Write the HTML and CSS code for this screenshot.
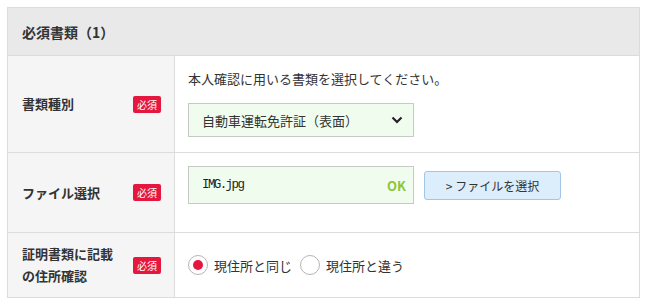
FILE: index.html
```html
<!DOCTYPE html>
<html lang="ja">
<head>
  <meta charset="UTF-8" />
  <title>必須書類</title>
  <link rel="stylesheet" href="styles.css">
</head>
<body>
  <div class="doc-box">
    <div class="doc-head">必須書類（1）</div>

    <div class="doc-row">
      <div class="label">
        <span>書類種別</span>
        <span class="badge">必須</span>
      </div>
      <div class="field field-select">
        <p class="note">本人確認に用いる書類を選択してください。</p>
        <div class="select">
          <span>自動車運転免許証（表面）</span>
          <svg class="chevron" width="12" height="8" viewBox="0 0 12 8">
            <path d="M1.5 1.5 L6 6 L10.5 1.5" fill="none" stroke="#222" stroke-width="2.2" />
          </svg>
        </div>
      </div>
    </div>

    <div class="doc-row">
      <div class="label">
        <span>ファイル選択</span>
        <span class="badge">必須</span>
      </div>
      <div class="field field-file">
        <div class="file-input">
          <span class="file-name">IMG.jpg</span>
          <span class="ok">OK</span>
        </div>
        <button class="file-btn">&gt; ファイルを選択</button>
      </div>
    </div>

    <div class="doc-row">
      <div class="label">
        <span>証明書類に記載<br>の住所確認</span>
        <span class="badge">必須</span>
      </div>
      <div class="field field-radio">
        <label class="radio">
          <span class="circle checked"></span>
          <span>現住所と同じ</span>
        </label>
        <label class="radio">
          <span class="circle"></span>
          <span>現住所と違う</span>
        </label>
      </div>
    </div>
  </div>
</body>
</html>
```

FILE: styles.css
```css
body {
  margin: 0;
  padding: 7px;
  background: #fff;
  color: #333;
  font-family: "Noto Sans CJK JP", "Noto Sans", sans-serif;
  font-size: 13px;
}

.doc-box {
  width: 633px;
  box-sizing: border-box;
  border: 1px solid #dcdcdc;
}

.doc-head {
  background: #e9e9e9;
  height: 47px;
  padding-left: 14px;
  display: flex;
  align-items: center;
  font-size: 14px;
  font-weight: bold;
  border-bottom: 1px solid #dcdcdc;
}

.doc-row {
  display: grid;
  grid-template-columns: 167px 1fr;
  border-bottom: 1px solid #dcdcdc;
}

.doc-row:last-child {
  border-bottom: none;
}

.label {
  background: #f5f5f5;
  border-right: 1px solid #dcdcdc;
  display: flex;
  align-items: center;
  justify-content: space-between;
  padding: 0 13px 0 14px;
  font-weight: bold;
  line-height: 22px;
}

.badge {
  background: #e5173f;
  color: #fff;
  font-size: 10px;
  font-weight: normal;
  line-height: 17px;
  padding: 0 4px;
  border-radius: 2px;
}

.field {
  padding: 0 13px;
}

.field-select {
  padding-top: 12px;
  padding-bottom: 15px;
}

.note {
  margin: 0 0 13px;
  line-height: 22px;
}

.select {
  width: 226px;
  height: 34px;
  box-sizing: border-box;
  border: 1px solid #c8c8c8;
  background: #f0fdee;
  display: flex;
  align-items: center;
  justify-content: space-between;
  padding: 0 10px 0 13px;
}

.field-file {
  display: flex;
  align-items: center;
  gap: 10px;
  padding-top: 13px;
  padding-bottom: 28px;
}

.file-input {
  width: 226px;
  height: 38px;
  box-sizing: border-box;
  border: 1px solid #c8c8c8;
  background: #f0fdee;
  display: flex;
  align-items: center;
  justify-content: space-between;
  padding: 0 7px 0 13px;
}

.file-name {
  font-family: "Liberation Mono", monospace;
  font-size: 12.5px;
  letter-spacing: -1.6px;
  color: #222;
}

.ok {
  color: #8cc63e;
  font-weight: bold;
  font-size: 13px;
}

.file-btn {
  width: 137px;
  height: 29px;
  background: #dcedfc;
  border: 1px solid #a4c6e6;
  border-radius: 3px;
  color: #333;
  font-family: inherit;
  font-size: 12px;
  padding: 0;
  cursor: pointer;
}

.field-radio {
  display: flex;
  align-items: center;
  gap: 8px;
  height: 64px;
}

.radio {
  display: flex;
  align-items: center;
  gap: 6px;
}

.circle {
  width: 20px;
  height: 20px;
  box-sizing: border-box;
  border: 1px solid #b5b5b5;
  border-radius: 50%;
  background: #fff;
  display: flex;
  align-items: center;
  justify-content: center;
}

.circle.checked::after {
  content: "";
  width: 10px;
  height: 10px;
  border-radius: 50%;
  background: #e5173f;
}
```
